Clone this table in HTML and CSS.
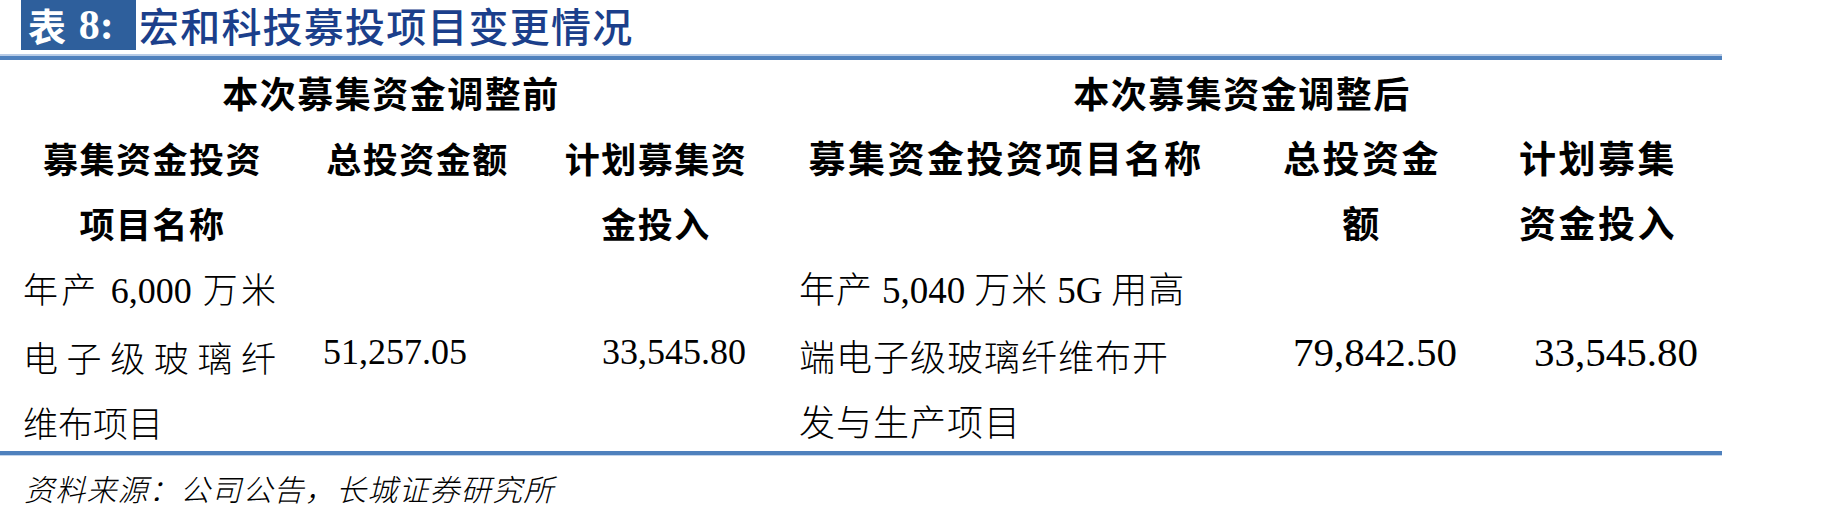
FILE: index.html
```html
<!DOCTYPE html>
<html lang="zh-CN">
<head>
<meta charset="utf-8">
<title>宏和科技募投项目变更情况</title>
<link rel="stylesheet" href="styles.css">
</head>
<body>
<div class="page">
  <div class="title">
    <span class="tag">表 <span class="num">8:</span></span>
    <span class="ttext">宏和科技募投项目变更情况</span>
  </div>
  <div class="rule-top"></div>
  <div class="table">
    <div class="cell head top span3">本次募集资金调整前</div>
    <div class="cell head top span3">本次募集资金调整后</div>

    <div class="cell head sub">募集资金投资<br>项目名称</div>
    <div class="cell head sub">总投资金额</div>
    <div class="cell head sub">计划募集资<br>金投入</div>
    <div class="cell head sub right">募集资金投资项目名称</div>
    <div class="cell head sub right">总投资金<br>额</div>
    <div class="cell head sub right">计划募集<br>资金投入</div>

    <div class="cell data name c1">
      <span class="jline">年产 <span class="lat">6,000</span> 万米</span>
      <span class="jline">电子级玻璃纤</span>
      <span class="line">维布项目</span>
    </div>
    <div class="cell data value v2">51,257.05</div>
    <div class="cell data value v3">33,545.80</div>
    <div class="cell data name c4">
      <span class="line">年产 <span class="lat">5,040</span> 万米 <span class="lat">5G</span> 用高</span>
      <span class="line">端电子级玻璃纤维布开</span>
      <span class="line">发与生产项目</span>
    </div>
    <div class="cell data value big v5">79,842.50</div>
    <div class="cell data value big v6">33,545.80</div>
  </div>
  <div class="rule-bottom"></div>
  <div class="source">资料来源：公司公告，长城证券研究所</div>
</div>
</body>
</html>
```
FILE: styles.css
```css
html, body {
  margin: 0;
  padding: 0;
  background: #ffffff;
}

.page {
  width: 1843px;
  height: 518px;
  font-family: "Liberation Serif", "Noto Sans CJK SC", serif;
  color: #000000;
}

.title {
  display: flex;
  align-items: stretch;
  height: 50px;
  padding-left: 21px;
}

.tag {
  display: flex;
  align-items: center;
  width: 115px;
  box-sizing: border-box;
  padding-left: 7px;
  background: #2e5f9c;
  color: #ffffff;
  font-family: "Noto Sans CJK SC", sans-serif;
  font-size: 38px;
  font-weight: 700;
  line-height: 50px;
  white-space: pre;
}

.tag .num {
  font-family: "Liberation Serif", serif;
  font-size: 42px;
  margin-left: 4px;
}

.ttext {
  margin-left: 3px;
  color: #1b3f8b;
  font-family: "Noto Sans CJK SC", sans-serif;
  font-size: 40px;
  font-weight: 500;
  line-height: 50px;
  letter-spacing: 1.2px;
  white-space: nowrap;
}

.rule-top {
  width: 1722px;
  height: 6px;
  margin-top: 4px;
  box-sizing: border-box;
  border-top: 2px solid #b7cbe6;
  background: #4f81bd;
}

.table {
  display: grid;
  grid-template-columns: 265px 265px 212px 488px 224px 248px;
  margin-left: 20px;
  width: 1702px;
}

.cell {
  line-height: 65px;
}

.head {
  font-family: "Noto Sans CJK SC", sans-serif;
  font-weight: 700;
  font-size: 35px;
  letter-spacing: 1.5px;
  text-align: center;
}

.head.top {
  font-size: 36px;
  letter-spacing: 1.5px;
}

.head.right {
  font-size: 37px;
  letter-spacing: 2.5px;
}

.span3 {
  grid-column: span 3;
}

.sub {
  height: 130px;
}

.data {
  height: 195px;
  font-family: "Liberation Serif", "Noto Sans CJK SC", serif;
  font-size: 35px;
}

.name {
  display: flex;
  flex-direction: column;
  font-family: "Noto Sans CJK SC", sans-serif;
  font-weight: 300;
}

.name .lat {
  font-family: "Liberation Serif", serif;
  font-size: 36px;
  font-weight: 400;
}

.c1 {
  padding-left: 3px;
  width: 253px;
}

.c4 {
  padding-left: 37px;
  font-size: 36px;
  letter-spacing: 1px;
}

.c4 .lat {
  font-size: 37px;
  letter-spacing: 0;
}

.jline {
  display: block;
  text-align: justify;
  text-align-last: justify;
}

.line {
  display: block;
}

.value {
  display: flex;
  align-items: center;
  font-size: 36px;
}

.value.big {
  font-size: 41px;
}

.v2 { padding-left: 38px; }
.v3 { padding-left: 52px; }
.v5 { padding-left: 43px; }
.v6 { padding-left: 60px; }

.rule-bottom {
  width: 1722px;
  height: 5px;
  margin-top: 1px;
  box-sizing: border-box;
  border-bottom: 1px solid #c3d4ea;
  background: #4f81bd;
}

.source {
  padding-left: 24px;
  margin-top: 14px;
  font-family: "Noto Sans CJK SC", sans-serif;
  font-weight: 300;
  font-style: italic;
  font-size: 30px;
  line-height: 36px;
  letter-spacing: 1.2px;
}
```
